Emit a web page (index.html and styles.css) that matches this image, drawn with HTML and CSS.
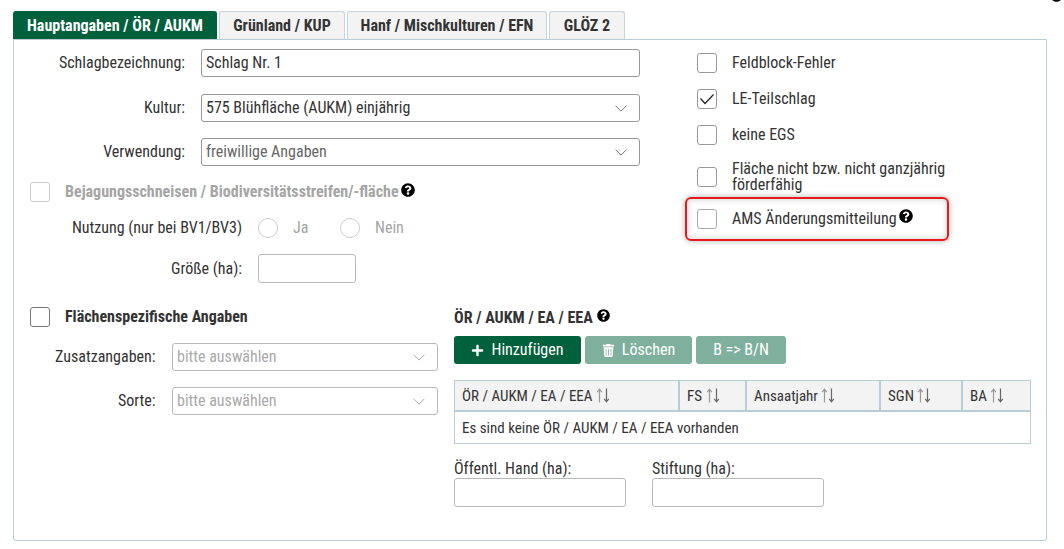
FILE: index.html
```html
<!DOCTYPE html>
<html lang="de">
<head>
<meta charset="utf-8">
<title>Schlag</title>
<link rel="stylesheet" href="styles.css">
</head>
<body>
<svg class="defs" width="0" height="0" aria-hidden="true">
  <symbol id="q" viewBox="0 0 512 512"><path d="M504 256c0 136.997-111.043 248-248 248S8 392.997 8 256C8 119.083 119.043 8 256 8s248 111.083 248 248zM262.655 90c-54.497 0-89.255 22.957-116.549 63.758-3.536 5.286-2.353 12.415 2.715 16.258l34.699 26.31c5.205 3.947 12.621 3.008 16.665-2.122 17.864-22.658 30.113-35.797 57.303-35.797 20.429 0 45.698 13.148 45.698 32.958 0 14.976-12.363 22.667-32.534 33.976C247.128 238.528 216 254.941 216 296v4c0 6.627 5.373 12 12 12h56c6.627 0 12-5.373 12-12v-1.333c0-28.462 83.186-29.647 83.186-106.667 0-58.002-60.165-102-116.531-102zM256 338c-25.365 0-46 20.635-46 46 0 25.364 20.635 46 46 46s46-20.636 46-46c0-25.365-20.635-46-46-46z"/></symbol>
  <symbol id="chev" viewBox="0 0 12 7"><path d="M.6 .8L6 6.100 11.400 .8" fill="none" stroke="currentColor" stroke-width="1"/></symbol>
  <symbol id="sort" viewBox="0 0 14 15"><path d="M3.500 14.500V2M1.200 4.200L3.500 1.200 5.800 4.200" fill="none" stroke="#999" stroke-width="1.200"/><path d="M10.500 .5V13.500M8.200 10.800l2.300 3 2.300-3" fill="none" stroke="#666" stroke-width="1.200"/></symbol>
</svg>
<svg class="corner-help"><use href="#q"/></svg>
<nav class="tabs">
  <a class="tab active">Hauptangaben / ÖR / AUKM</a>
  <a class="tab w-gruen">Grünland / KUP</a>
  <a class="tab w-hanf">Hanf / Mischkulturen / EFN</a>
  <a class="tab w-gloez">GLÖZ 2</a>
</nav>
<main class="panel">
  <section class="top">
    <div class="top-left">
      <div class="form-row first">
        <label class="lbl">Schlagbezeichnung:</label>
        <div class="input wide text-dark">Schlag Nr. 1</div>
      </div>
      <div class="form-row">
        <label class="lbl">Kultur:</label>
        <div class="select wide text-dark">575 Blühfläche (AUKM) einjährig<svg class="chev"><use href="#chev"/></svg></div>
      </div>
      <div class="form-row">
        <label class="lbl">Verwendung:</label>
        <div class="select wide text-mid">freiwillige Angaben<svg class="chev"><use href="#chev"/></svg></div>
      </div>
      <div class="check-head disabled">
        <span class="cb cb-light"></span>
        <b>Bejagungsschneisen / Biodiversitätsstreifen/-fläche</b>
        <svg class="help"><use href="#q"/></svg>
      </div>
      <div class="sub-row nutzung">
        <label class="sub-lbl">Nutzung (nur bei BV1/BV3)</label>
        <span class="radio"></span><span class="radio-txt ja">Ja</span>
        <span class="radio"></span><span class="radio-txt">Nein</span>
      </div>
      <div class="sub-row groesse">
        <label class="sub-lbl">Größe (ha):</label>
        <div class="input small"></div>
      </div>
    </div>
    <div class="top-right">
      <div class="opt"><span class="cb"></span><span>Feldblock-Fehler</span></div>
      <div class="opt"><span class="cb"><svg viewBox="0 0 18 18"><path d="M2.500 8.500l4.500 5 8.500-9" fill="none" stroke="#222" stroke-width="1.200"/></svg></span><span>LE-Teilschlag</span></div>
      <div class="opt"><span class="cb"></span><span>keine EGS</span></div>
      <div class="opt"><span class="cb"></span><span class="two">Fläche nicht bzw. nicht ganzjährig<br>förderfähig</span></div>
      <div class="opt marked"><span class="cb cb-mid"></span><span>AMS Änderungsmitteilung</span><svg class="help"><use href="#q"/></svg></div>
    </div>
  </section>
  <section class="bottom">
    <div class="bottom-left">
      <div class="check-head flaechen">
        <span class="cb cb-dark"></span>
        <b>Flächenspezifische Angaben</b>
      </div>
      <div class="form-row narrow">
        <label class="lbl">Zusatzangaben:</label>
        <div class="select mid text-light">bitte auswählen<svg class="chev"><use href="#chev"/></svg></div>
      </div>
      <div class="form-row narrow">
        <label class="lbl">Sorte:</label>
        <div class="select mid text-light">bitte auswählen<svg class="chev"><use href="#chev"/></svg></div>
      </div>
    </div>
    <div class="bottom-right">
      <h3 class="title">ÖR / AUKM / EA / EEA<svg class="help"><use href="#q"/></svg></h3>
      <div class="buttons">
        <button class="btn b1"><svg viewBox="0 0 448 512"><path d="M416 208H272V64c0-17.670-14.330-32-32-32h-32c-17.670 0-32 14.330-32 32v144H32c-17.670 0-32 14.330-32 32v32c0 17.670 14.330 32 32 32h144v144c0 17.670 14.330 32 32 32h32c17.670 0 32-14.330 32-32V304h144c17.670 0 32-14.330 32-32v-32c0-17.670-14.330-32-32-32z"/></svg>Hinzufügen</button>
        <button class="btn off b2"><svg viewBox="0 0 448 512"><path d="M432 32H312l-9.400-18.700A24 24 0 0 0 281.100 0H166.800a23.700 23.700 0 0 0-21.400 13.300L136 32H16A16 16 0 0 0 0 48v32a16 16 0 0 0 16 16h416a16 16 0 0 0 16-16V48a16 16 0 0 0-16-16zM53.200 467a48 48 0 0 0 47.900 45h245.800a48 48 0 0 0 47.900-45L416 128H32zM304 192h32v256h-32zm-96 0h32v256h-32zm-96 0h32v256h-32z" fill-rule="evenodd"/></svg>Löschen</button>
        <button class="btn off b3">B =&gt; B/N</button>
      </div>
      <div class="table">
        <div class="th">ÖR / AUKM / EA / EEA<svg class="sort"><use href="#sort"/></svg></div>
        <div class="th">FS<svg class="sort"><use href="#sort"/></svg></div>
        <div class="th">Ansaatjahr<svg class="sort"><use href="#sort"/></svg></div>
        <div class="th">SGN<svg class="sort"><use href="#sort"/></svg></div>
        <div class="th last">BA<svg class="sort"><use href="#sort"/></svg></div>
        <div class="td">Es sind keine ÖR / AUKM / EA / EEA vorhanden</div>
      </div>
      <div class="ha-row">
        <div class="ha"><label>Öffentl. Hand (ha):</label><div class="input ha-in"></div></div>
        <div class="ha"><label>Stiftung (ha):</label><div class="input ha-in"></div></div>
      </div>
    </div>
  </section>
</main>
</body>
</html>
```
FILE: styles.css
```css
*, *::after { box-sizing: border-box; }
html, body { margin: 0; height: 100%; }
body {
  position: relative;
  padding: 11px 0 0 13px;
  background: #fff;
  color: #333;
  font-family: Roboto, "Liberation Sans", sans-serif;
  font-stretch: 75%;
  font-size: 16px;
  line-height: 18px;
  overflow: hidden;
}
.defs { position: absolute; }
.corner-help { position: absolute; right: 1px; top: -11px; width: 13px; height: 13px; }

.tabs { display: flex; height: 28px; gap: 2px; }
.tab {
  display: flex; align-items: center; justify-content: center;
  width: 204px; height: 28px;
  background: #f3f3f3; color: #333;
  border: 1px solid #c6d5dc; border-bottom: 0;
  border-radius: 3px 3px 0 0;
  font-weight: 700;
}
.tab.active { background: #00613c; border-color: #00613c; color: #fff; }
.w-gruen { width: 126px; }
.w-hanf { width: 200px; }
.w-gloez { width: 76px; }

.panel {
  width: 1034px; height: 502px;
  border: 1px solid #b8cdd6;
  border-radius: 0 0 3px 3px;
}
.top { display: flex; height: 267px; }
.top-left { width: 683px; padding-top: 9px; }
.top-right { flex: 1; padding-top: 13px; display: flex; flex-direction: column; gap: 16px; }

.form-row { display: flex; align-items: center; margin-top: 16px; }
.form-row.first { margin-top: 0; }
.form-row.first + .form-row { margin-top: 17px; }
.lbl { width: 171px; text-align: right; margin-right: 16px; }
.input, .select {
  position: relative;
  display: flex; align-items: center;
  height: 28px; padding: 0 4px;
  background: #fff;
  border: 1px solid #b9b9b9;
  border-radius: 3px;
}
.wide { width: 439px; border-color: #999; }
.mid { width: 266px; }
.text-dark { color: #333; }
.text-mid { color: #666; }
.text-light { color: #aaa; }
.chev { position: absolute; right: 12px; top: 10px; width: 12px; height: 7px; color: #777; }
.text-light .chev { color: #aaa; }

.cb {
  flex: none; display: block;
  width: 20px; height: 20px;
  background: #fff;
  border: 1px solid #999;
  border-radius: 3px;
}
.cb svg { display: block; width: 18px; height: 18px; }
.cb-light { border-color: #ccc; }
.cb-mid { border-color: #aaa; }
.cb-dark { border-color: #777; }

.check-head { display: flex; align-items: center; padding-left: 16px; margin-top: 16px; }
.check-head b { margin-left: 15px; font-weight: 700; }
.check-head.disabled b { color: #a5a5a5; }
.check-head.flaechen { margin-top: 0; margin-bottom: 16px; }
.help { flex: none; width: 14px; height: 14px; margin: -5px 0 0 2px; fill: #000; }
.marked .help { margin-top: -7px; }

.sub-row { display: flex; align-items: center; }
.nutzung { margin-top: 16px; height: 20px; }
.groesse { margin-top: 16px; }
.sub-lbl { width: 228px; text-align: right; margin-right: 16px; }
.radio { flex: none; width: 20px; height: 20px; border: 1px solid #ccc; border-radius: 50%; }
.radio-txt { margin-left: 15px; color: #a5a5a5; }
.radio-txt.ja { width: 47px; }
.small { width: 98px; height: 29px; }

.opt { display: flex; align-items: center; }
.opt > span:not(.cb) { margin-left: 15px; }
.two { line-height: 16px; }
.marked { position: relative; }
.marked::after {
  content: "";
  position: absolute; left: -12px; top: -12px; width: 264px; height: 44px;
  border: 2px solid #e8191c;
  border-radius: 6px;
  box-shadow: 0 0 6px rgba(0,0,0,.3), inset 0 0 6px rgba(0,0,0,.2);
}

.bottom { display: flex; }
.bottom-left { width: 440px; }
.bottom-right { width: 577px; }
.narrow .lbl { width: 141.5px; margin-right: 16.5px; }

.title { display: flex; margin: 0 0 7px; height: 22px; align-items: center; font-size: 16px; font-weight: 700; color: #333; }
.title .help { width: 13px; height: 13px; margin-left: 4px; }
.buttons { display: flex; gap: 4px; }
.btn {
  display: flex; align-items: center; justify-content: center;
  height: 28px; padding: 0;
  border: 0; border-radius: 3px;
  background: #00613c; color: #fff;
  font: inherit; font-stretch: 75%;
}
.btn svg { width: 13px; height: 13px; margin-right: 7px; fill: #fff; }
.b1 { width: 127px; }
.b2 { width: 107px; }
.b3 { width: 90px; }
.off { background: #7fb09d; }

.table {
  display: grid;
  grid-template-columns: 225px 67px 134px 82px 67px;
  margin-top: 16px;
  border: 1px solid #b8cdd6;
  font-size: 15px;
}
.th {
  display: flex; align-items: center;
  height: 31px; padding: 0 7px;
  background: #f3f3f3;
  border-right: 2px solid #b8cdd6;
  border-bottom: 2px solid #b8cdd6;
}
.th.last { border-right: 0; }
.sort { width: 14px; height: 15px; margin-left: 3.5px; }
.td { grid-column: 1 / -1; height: 31px; padding: 0 7px; display: flex; align-items: center; }

.ha-row { display: flex; gap: 26px; margin-top: 16px; }
.ha { display: flex; flex-direction: column; width: 172px; }
.ha-in { width: 172px; height: 29px; }
```
